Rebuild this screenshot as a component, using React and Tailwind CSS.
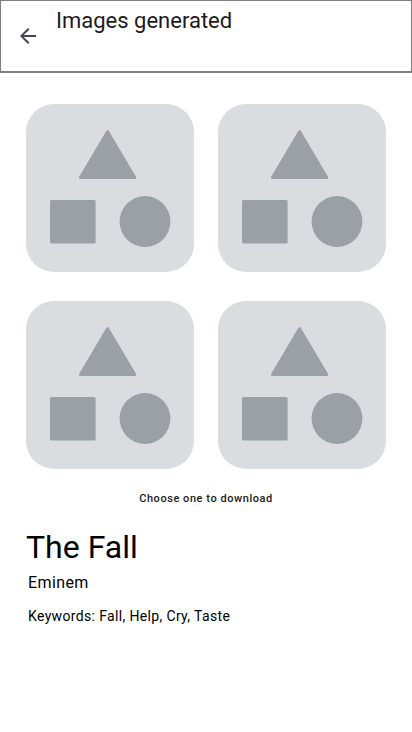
const options = [1, 2, 3, 4];

function BackIcon() {
  return (
    <svg viewBox="0 0 24 24" className="size-6" fill="currentColor" aria-hidden="true">
      <path d="M7.825 13L13.425 18.6L12 20L4 12L12 4L13.425 5.4L7.825 11H20V13H7.825Z" />
    </svg>
  );
}

function Placeholder() {
  return (
    <svg viewBox="0 0 168 168" className="block w-full" fill="#9aa0a6" aria-hidden="true">
      <path d="M80.3 26.9Q81.6 25.2 82.9 26.9L110 72.7Q110.7 75 108.7 75H54.5Q52.5 75 53.2 72.7Z" />
      <rect x="24" y="96" width="45.6" height="43.6" rx="1.5" />
      <circle cx="119" cy="117.5" r="25.4" />
    </svg>
  );
}

export default function App() {
  return (
    <div className="min-h-screen bg-white font-['Roboto',sans-serif] text-black">
      <header className="flex h-[73px] border border-b-2 border-[#7f7f7f] px-[7px] pt-[5px]">
        <button
          type="button"
          aria-label="Back"
          className="mt-[10px] flex size-10 items-center justify-center text-[#49454f]"
        >
          <BackIcon />
        </button>
        <h1 className="mt-px ml-2 text-[22px] leading-7 text-[#1d1b20]">Images generated</h1>
      </header>
      <main className="px-[26px] pt-[31px]">
        <div className="grid grid-cols-2 gap-x-6 gap-y-[29px]">
          {options.map((n) => (
            <button
              key={n}
              type="button"
              aria-label={`Download image ${n}`}
              className="aspect-square overflow-hidden rounded-[28px] bg-[#dadce0]"
            >
              <Placeholder />
            </button>
          ))}
        </div>
        <p className="mt-[22px] text-center text-[11px] leading-4 font-medium tracking-wider text-[#1d1b20]">
          Choose one to download
        </p>
        <h2 className="mt-5 text-[32px] leading-10">The Fall</h2>
        <p className="ml-[2px] mt-1 text-base tracking-wide">Eminem</p>
        <p className="ml-[2px] mt-[11px] text-sm tracking-wide">Keywords: Fall, Help, Cry, Taste</p>
      </main>
    </div>
  );
}
